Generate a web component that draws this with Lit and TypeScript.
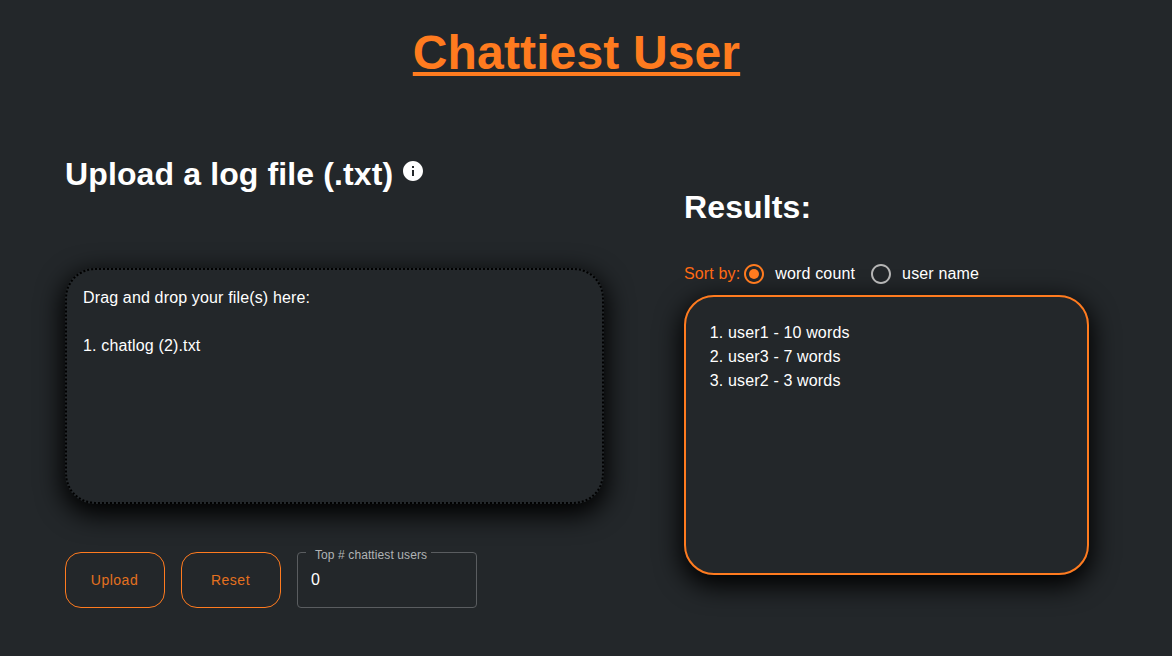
import { LitElement, html, css, svg } from "lit";
import { customElement, state } from "lit/decorators.js";

const RESULTS = [
  { name: "user1", words: 10 },
  { name: "user3", words: 7 },
  { name: "user2", words: 3 },
];

const radioRing = svg`<path d="M12 2C6.48 2 2 6.48 2 12s4.48 10 10 10 10-4.48 10-10S17.52 2 12 2zm0 18c-4.42 0-8-3.58-8-8s3.58-8 8-8 8 3.58 8 8-3.58 8-8 8z"></path>`;

@customElement("app-root")
export class AppRoot extends LitElement {
  static styles = css`
    :host {
      display: block;
      min-height: 656px;
      background: #23272a;
      color: #fff;
      font-family: "Liberation Sans", Arial, sans-serif;
      font-size: 16px;
      line-height: 24px;
      letter-spacing: 0.15px;
    }
    h1 {
      width: 1153px;
      margin: 0;
      padding-top: 25px;
      text-align: center;
      font-size: 48px;
      line-height: 55px;
      letter-spacing: 0.14px;
      color: #ff7b1f;
      text-decoration: underline;
    }
    main {
      display: grid;
      grid-template-columns: 539px 405px;
      column-gap: 80px;
      padding-left: 65px;
    }
    h2 {
      margin: 0;
      font-size: 32px;
      line-height: 37px;
      letter-spacing: 0.125px;
    }
    .left {
      padding-top: 76px;
    }
    .right {
      padding-top: 109px;
    }
    .upload-title {
      display: flex;
      align-items: flex-start;
    }
    .info {
      width: 24px;
      height: 24px;
      margin: 3px 0 0 8px;
      fill: #fff;
    }
    .drop {
      box-sizing: border-box;
      height: 236px;
      margin-top: 75px;
      padding: 16px;
      border: 2px dotted #000;
      border-radius: 30px;
      box-shadow: 0 8px 26px 3px #000;
    }
    .drop p {
      margin: 0 0 24px;
    }
    .actions {
      display: flex;
      gap: 16px;
      margin-top: 48px;
    }
    button {
      box-sizing: border-box;
      width: 100px;
      height: 56px;
      padding: 0 1px 0 0;
      border: 1px solid #ff7b1f;
      border-radius: 16px;
      background: transparent;
      color: #e4711f;
      font: inherit;
      font-size: 14px;
      letter-spacing: 0.5px;
      cursor: pointer;
    }
    .field {
      position: relative;
      box-sizing: border-box;
      width: 180px;
      height: 56px;
      border: 1px solid #5a5d60;
      border-radius: 4px;
    }
    .field label {
      position: absolute;
      top: -5px;
      left: 8px;
      height: 10px;
      padding: 0 4px 0 9px;
      background: #23272a;
      color: #b0b3b5;
      font-size: 12px;
      line-height: 14px;
      letter-spacing: 0.1px;
    }
    .field input {
      box-sizing: border-box;
      width: 100%;
      height: 100%;
      padding: 0 13px;
      border: 0;
      outline: 0;
      background: transparent;
      color: #fff;
      font: inherit;
    }
    .sort {
      display: flex;
      align-items: center;
      height: 24px;
      margin-top: 36px;
    }
    .sort-label {
      margin-right: 2px;
      color: #ff6a13;
    }
    .option {
      display: flex;
      align-items: center;
      gap: 9px;
      margin-right: 14px;
      cursor: pointer;
    }
    .option svg {
      width: 24px;
      height: 24px;
      fill: #b5b5b5;
    }
    .option.on svg {
      fill: #ff7b1f;
    }
    .results {
      box-sizing: border-box;
      height: 280px;
      margin-top: 9px;
      padding: 24px 24px;
      border: 2px solid #ff7b1f;
      border-radius: 30px;
      box-shadow: 0 8px 26px 3px #000;
    }
    .results ol {
      margin: 0;
      padding-left: 18px;
    }
  `;

  @state() sort: "words" | "name" = "words";

  renderOption(key: "words" | "name", label: string) {
    const on = this.sort === key;
    return html`<div class="option ${on ? "on" : ""}" @click=${() => (this.sort = key)}>
      <svg viewBox="0 0 24 24">
        ${radioRing}
        ${on ? svg`<circle cx="12" cy="12" r="5"></circle>` : null}
      </svg>
      <span>${label}</span>
    </div>`;
  }

  render() {
    const rows = [...RESULTS].sort((a, b) =>
      this.sort === "words" ? b.words - a.words : a.name.localeCompare(b.name)
    );
    return html`
      <h1>Chattiest User</h1>
      <main>
        <section class="left">
          <div class="upload-title">
            <h2>Upload a log file (.txt)</h2>
            <svg class="info" viewBox="0 0 24 24">
              <path d="M12 2C6.48 2 2 6.48 2 12s4.48 10 10 10 10-4.48 10-10S17.52 2 12 2zm1 15h-2v-6h2v6zm0-8h-2V7h2v2z"></path>
            </svg>
          </div>
          <div class="drop">
            <p>Drag and drop your file(s) here:</p>
            <div>1. chatlog (2).txt</div>
          </div>
          <div class="actions">
            <button>Upload</button>
            <button>Reset</button>
            <div class="field">
              <label>Top # chattiest users</label>
              <input type="number" value="0" />
            </div>
          </div>
        </section>
        <section class="right">
          <h2>Results:</h2>
          <div class="sort">
            <span class="sort-label">Sort by:</span>
            ${this.renderOption("words", "word count")}
            ${this.renderOption("name", "user name")}
          </div>
          <div class="results">
            <ol>
              ${rows.map((r) => html`<li>${r.name} - ${r.words} words</li>`)}
            </ol>
          </div>
        </section>
      </main>
    `;
  }
}
